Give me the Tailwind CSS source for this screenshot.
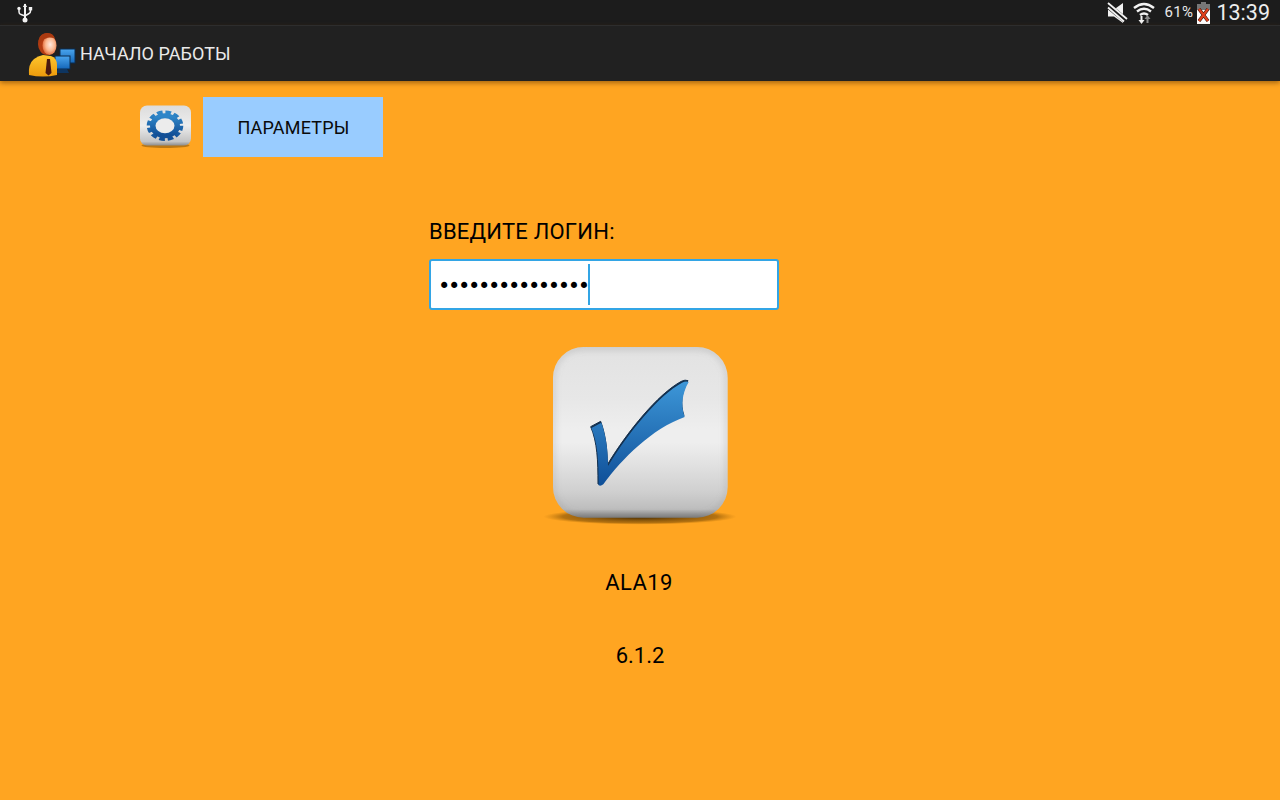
<!DOCTYPE html>
<html lang="ru">
<head>
<meta charset="utf-8">
<title>Начало работы</title>
<script src="https://cdn.jsdelivr.net/npm/@tailwindcss/browser@4"></script>
</head>
<body class="w-[1280px] h-[800px] overflow-hidden bg-[#ffa521] font-['Roboto',sans-serif]">

<!-- status bar -->
<div class="h-[25px] bg-[#1c1c1c] flex items-center justify-between pl-[16px] pr-[10px] text-white">
  <svg width="18" height="20" viewBox="0 0 18 20" fill="none" stroke="#f2f2f2">
    <path d="M9 1v15" stroke-width="2"/>
    <path d="M9 0.5l2.2 3.5h-4.4z" fill="#f2f2f2" stroke="none"/>
    <path d="M3 6.5v2.5q0 2 2 2.5l4 1.5 4-2.5q1.500-.7 1.500-2.500v-1" stroke-width="1.500"/>
    <circle cx="3" cy="5.500" r="1.700" fill="#f2f2f2" stroke="none"/>
    <rect x="12.800" y="4" width="3.400" height="3.400" fill="#f2f2f2" stroke="none"/>
    <circle cx="9" cy="17" r="2.500" fill="#f2f2f2" stroke="none"/>
  </svg>
  <div class="flex items-center">
    <svg width="22" height="22" viewBox="0 0 22 22" class="mr-[3px]">
      <path d="M1 7.500h6l9-6.500v20l-9-6.500h-6z" fill="#f2f2f2"/>
      <path d="M0 3l21 17" stroke="#1c1c1c" stroke-width="6"/>
      <path d="M1 1l19 16M1 5.500l16 14" stroke="#f2f2f2" stroke-width="1.800" fill="none"/>
    </svg>
    <svg width="24" height="24" viewBox="0 0 24 24" fill="none" stroke="#f2f2f2" stroke-width="2.400">
      <path d="M2 7q10-8 20 0M5 10.500q7-5.500 14 0M8 14q4-3 8 0"/>
      <path d="M9.500 15v5" stroke-width="2"/>
      <path d="M6.500 19h6l-3 4z" fill="#f2f2f2" stroke="none"/>
      <path d="M15.500 22v-5" stroke="#8a8a8a" stroke-width="2"/>
      <path d="M12.500 18h6l-3-4z" fill="#8a8a8a" stroke="none"/>
    </svg>
    <span class="ml-[8px] text-[15px] leading-none text-[#e8e8e8] w-[32px] tracking-[0.3px]">61%</span>
    <svg width="15" height="22" viewBox="0 0 15 22" class="mr-[5px]">
      <rect x="5" y="0" width="5" height="2" fill="#777"/>
      <rect x="1" y="2" width="13" height="6" fill="#777"/>
      <rect x="1" y="8" width="13" height="14" fill="#fff"/>
      <path d="M3 7l9 12M12 7l-9 12" stroke="#3a1a10" stroke-width="3.400"/>
      <path d="M3 7l9 12M12 7l-9 12" stroke="#e0401c" stroke-width="2.200"/>
    </svg>
    <span class="text-[21.5px] leading-none text-[#ededed]">13:39</span>
  </div>
</div>

<!-- action bar -->
<div class="relative h-[56px] bg-[#212121] border-t border-[#2d2d2d] flex items-center pl-[26px] shadow-[0_2px_5px_rgba(90,50,0,0.55)]">
  <svg width="50" height="50" viewBox="0 0 50 50" class="mr-[4px]">
    <defs>
      <linearGradient id="scr" x1="0" y1="0" x2="0" y2="1">
        <stop offset="0" stop-color="#4aa5ee"/>
        <stop offset="1" stop-color="#1466b8"/>
      </linearGradient>
      <linearGradient id="body" x1="0" y1="0" x2="0" y2="1">
        <stop offset="0" stop-color="#ffc72e"/>
        <stop offset="1" stop-color="#ec9a0c"/>
      </linearGradient>
      <radialGradient id="face" cx="0.550" cy="0.450" r="0.650">
        <stop offset="0" stop-color="#ffe9de"/>
        <stop offset="0.500" stop-color="#fbb890"/>
        <stop offset="1" stop-color="#d9501c"/>
      </radialGradient>
    </defs>
    <rect x="34" y="20" width="15" height="14" fill="url(#scr)" stroke="#0b2c50"/>
    <rect x="29" y="27" width="15" height="13" fill="url(#scr)" stroke="#0b2c50"/>
    <path d="M32 40h9l2 4h-13z" fill="#0e3560"/>
    <path d="M3 46q-1-11 5-16 4-3 9-4l8 1q6 2 6 9v10q-14 3-28 0z" fill="url(#body)"/>
    <path d="M21 30h3l1.500 14-3 2.500-3-2.500z" fill="#4a1a10"/>
    <ellipse cx="21" cy="15" rx="9" ry="11" fill="#b23c12"/>
    <ellipse cx="23.500" cy="16.500" rx="7" ry="9.500" fill="url(#face)"/>
    <path d="M13 16q-2-10 6-11.500 8-1.500 10 5-6-2-9 0-5 1-7 6.500z" fill="#ab3a10"/>
  </svg>
  <span class="text-[18px] tracking-[0.05px] text-[#eaeaea] leading-none">НАЧАЛО РАБОТЫ</span>
</div>

<!-- settings row -->
<div class="flex items-center pt-[16px] pl-[139px]">
  <svg width="53" height="46" viewBox="0 0 53 46" class="mr-[11px]">
    <defs>
      <linearGradient id="gearBg" x1="0" y1="0" x2="0" y2="1">
        <stop offset="0" stop-color="#dcdcdc"/>
        <stop offset="0.500" stop-color="#ededed"/>
        <stop offset="0.900" stop-color="#c4c4c4"/>
        <stop offset="1" stop-color="#8c8c8c"/>
      </linearGradient>
      <linearGradient id="gearFg" x1="0" y1="0" x2="0" y2="1">
        <stop offset="0" stop-color="#2f86c8"/>
        <stop offset="1" stop-color="#124f96"/>
      </linearGradient>
    </defs>
    <ellipse cx="26.500" cy="41.500" rx="24" ry="2.500" fill="#7a4c08" opacity="0.500"/>
    <rect x="1" y="1.500" width="51" height="40" rx="7" fill="url(#gearBg)"/>
    <g transform="translate(26 21.700) scale(1.200 1)">
      <circle r="13" fill="none" stroke="url(#gearFg)" stroke-width="4.500" stroke-dasharray="4.500 2.300"/>
      <circle r="9" fill="none" stroke="url(#gearFg)" stroke-width="7"/>
    </g>
    <ellipse cx="26" cy="21.700" rx="9.500" ry="7.500" fill="#ececec"/>
  </svg>
  <div class="w-[180px] h-[60px] pl-[1px] bg-[#99ccff] flex items-center justify-center text-[18px] tracking-[0.2px] text-[#0a0a0a]">ПАРАМЕТРЫ</div>
</div>

<!-- login -->
<div class="ml-[429px] mt-[60px] w-[350px]">
  <div class="text-[22px] leading-[30px] tracking-[0.22px] text-black">ВВЕДИТЕ ЛОГИН:</div>
  <div class="mt-[12px] h-[51px] bg-white border-2 border-[#33a5e5] rounded-[3px] flex items-center pl-[7px]">
    <span class="pt-[3px] text-[21px] leading-none tracking-[-2.400px] text-black font-['DejaVu_Sans',sans-serif] w-[150px] whitespace-nowrap">•••••••••••••••</span>
    <span class="w-[2px] h-[41px] bg-[#33a5e5]"></span>
  </div>
</div>

<!-- ok button -->
<div class="flex justify-center mt-[25px]">
  <svg width="210" height="200" viewBox="0 0 630 600">
    <defs>
      <linearGradient id="okBg" x1="0" y1="0" x2="0" y2="1">
        <stop offset="0" stop-color="#dcdcdc"/>
        <stop offset="0.060" stop-color="#e3e3e3"/>
        <stop offset="0.300" stop-color="#e7e7e7"/>
        <stop offset="0.480" stop-color="#eeeeee"/>
        <stop offset="0.560" stop-color="#eeeeee"/>
        <stop offset="0.700" stop-color="#e0e0e0"/>
        <stop offset="0.850" stop-color="#cfcfcf"/>
        <stop offset="0.950" stop-color="#bdbdbd"/>
        <stop offset="1" stop-color="#777"/>
      </linearGradient>
      <linearGradient id="okTick" x1="0" y1="0" x2="0" y2="1">
        <stop offset="0" stop-color="#3d97d8"/>
        <stop offset="1" stop-color="#0f4f98"/>
      </linearGradient>
      <radialGradient id="okShadow" cx="0.500" cy="0.500" r="0.500">
        <stop offset="0" stop-color="#2a1a00" stop-opacity="0.900"/>
        <stop offset="0.800" stop-color="#6a4000" stop-opacity="0.500"/>
        <stop offset="1" stop-color="#a06000" stop-opacity="0"/>
      </radialGradient>
      <filter id="okBlur" x="-10%" y="-10%" width="120%" height="120%">
        <feGaussianBlur stdDeviation="9"/>
      </filter>
      <clipPath id="okClip">
        <rect x="54" y="36" width="524" height="512" rx="92"/>
      </clipPath>
    </defs>
    <ellipse cx="315" cy="545" rx="290" ry="24" fill="url(#okShadow)"/>
    <rect x="54" y="36" width="524" height="512" rx="92" fill="url(#okBg)"/>
    <g clip-path="url(#okClip)">
      <rect x="54" y="36" width="524" height="512" rx="92" fill="none" stroke="#8d8d8d" stroke-opacity="0.350" stroke-width="12" filter="url(#okBlur)"/>
    </g>
    <path d="M168 278 L198 262 C212 300 218 345 218 392 C280 290 370 180 440 142 Q452 136 460 140 C440 175 436 210 448 245 C350 280 260 370 204 447 Q196 454 190 450 C190 380 188 325 168 278 Z" fill="#13304f" stroke="#13304f" stroke-width="3" transform="translate(-1 -3)"/>
    <path d="M168 278 L198 262 C212 300 218 345 218 392 C280 290 370 180 440 142 Q452 136 460 140 C440 175 436 210 448 245 C350 280 260 370 204 447 Q196 454 190 450 C190 380 188 325 168 278 Z" fill="url(#okTick)" transform="translate(1 1)"/>
  </svg>
</div>

<!-- info -->
<div class="text-center text-[22px] leading-[30px] tracking-[0.4px] text-black mt-[33px] pr-[2px]">ALA19</div>
<div class="text-center text-[22px] leading-[30px] text-black mt-[43px]">6.1.2</div>

</body>
</html>
